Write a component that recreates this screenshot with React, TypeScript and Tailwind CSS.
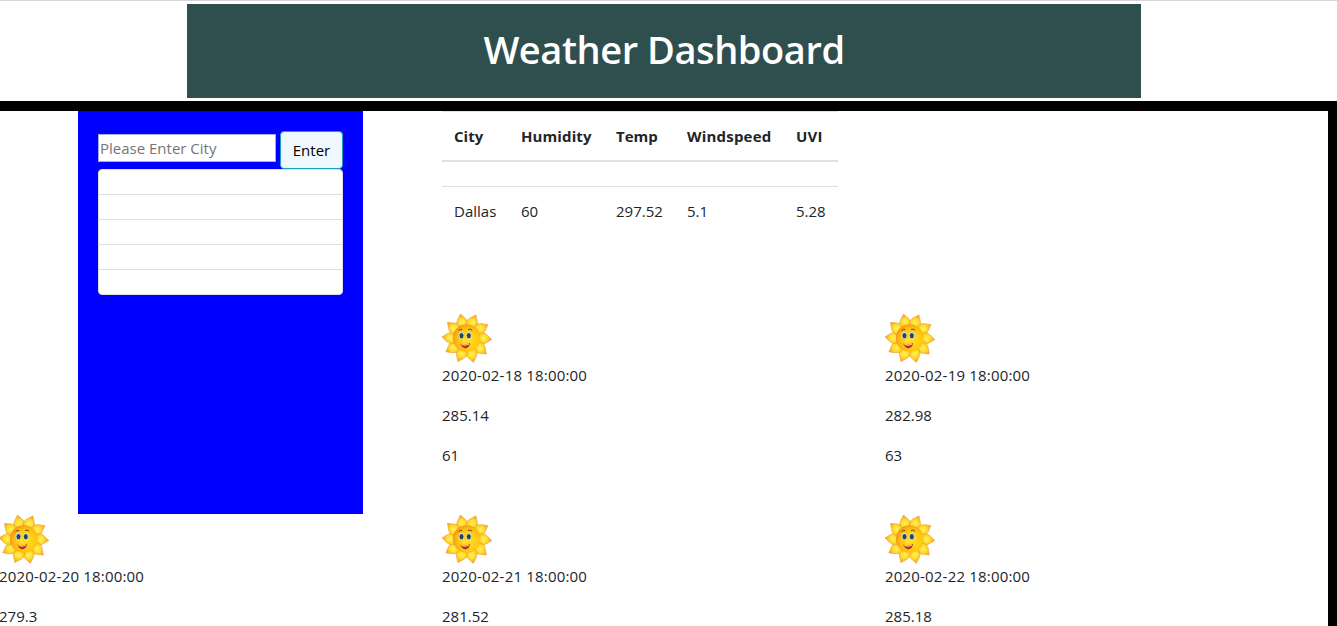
const font = "font-['Open_Sans','Noto_Sans',sans-serif]";

const petalAngles = [10, 46, 82, 118, 154, 190, 226, 262, 298, 334];

function Sun() {
  return (
    <svg className="block size-[50px]" viewBox="0 0 50 50" aria-hidden="true">
      <defs>
        <radialGradient id="petal" gradientUnits="userSpaceOnUse" cx="0" cy="-16.5" r="8.2">
          <stop offset="0" stopColor="#fff25c" />
          <stop offset="0.45" stopColor="#ffdc2c" />
          <stop offset="1" stopColor="#f39a22" />
        </radialGradient>
        <radialGradient id="face" cx="0.58" cy="0.56" r="0.62">
          <stop offset="0" stopColor="#ffe022" />
          <stop offset="0.6" stopColor="#ffc814" />
          <stop offset="0.85" stopColor="#f9a814" />
          <stop offset="1" stopColor="#ee8a18" />
        </radialGradient>
      </defs>
      {petalAngles.map((angle) => (
        <path
          key={angle}
          transform={`translate(24.9 25.2) rotate(${angle - 27})`}
          d="M-4.4 -11 C-7.6 -17 -4.4 -19.5 1 -25 C3 -20.5 7.2 -18 4.8 -11 Z"
          fill="url(#petal)"
          stroke="#f0a03c"
          strokeWidth="0.6"
          strokeLinejoin="round"
        />
      ))}
      <circle cx="24.7" cy="25" r="13.8" fill="url(#face)" />
      <ellipse cx="19.2" cy="22.3" rx="2.7" ry="3.5" fill="#cfdcc8" />
      <ellipse cx="27" cy="22.3" rx="2.7" ry="3.5" fill="#cfdcc8" />
      <ellipse cx="19.5" cy="22.6" rx="2" ry="2.7" fill="#1f4468" />
      <ellipse cx="26.8" cy="22.6" rx="2" ry="2.7" fill="#1f4468" />
      <path d="M16.5 17.6 Q18.3 15.7 20.3 16.7 M26 16.5 Q28.3 15.3 30.3 17.3" fill="none" stroke="#623410" strokeWidth="0.9" />
      <ellipse cx="22.8" cy="27.6" rx="2.4" ry="1.9" fill="#ffdf38" />
      <path d="M18 30.6 Q23 33.3 28.2 29.8 Q27.2 35.4 23 35.4 Q20 35 18 30.6 Z" fill="#b9301c" />
      <path d="M19.3 31.6 Q23.5 33.3 27.2 31" fill="none" stroke="#fff3df" strokeWidth="0.8" />
    </svg>
  );
}

function Forecast({ date, temp, humidity }: { date: string; temp: string; humidity?: string }) {
  return (
    <article className="flex flex-col">
      <Sun />
      <p className="mb-4 h-6 tracking-[0.19px]">{date}</p>
      <p className="h-6">{temp}</p>
      {humidity && <p className="mt-4 h-6">{humidity}</p>}
    </article>
  );
}

export default function App() {
  return (
    <div className={`h-[626px] w-[1337px] overflow-hidden bg-white text-[15px] leading-6 text-[#212529] ${font}`}>
      <header className="flex h-[101px] justify-center border-t border-[#d9d7d8] pr-[9px] pt-[3px]">
        <div className="flex h-[94px] w-[954px] items-center justify-center bg-[#2f4f4f] pb-[5px]">
          <h1 className="text-[38px] font-semibold leading-[48px] tracking-[-0.44px] text-white">Weather Dashboard</h1>
        </div>
      </header>
      <main className="h-[525px] overflow-hidden border-r-[9px] border-t-[10px] border-black">
        <div className="grid grid-cols-[442px_443px_443px]">
          <section className="ml-[78px] h-[403px] w-[285px] bg-[#0000ff] px-5 pt-5">
            <div className="flex h-[38px] items-start gap-1">
              <input
                className="mt-[3px] h-7 w-[178px] border border-[#a9a9dc] bg-white px-px text-[15px] placeholder:text-[#757575]"
                placeholder="Please Enter City"
              />
              <button className="h-[38px] w-[63px] rounded border border-[#17a2b8] bg-[#f0f8ff] text-black">Enter</button>
            </div>
            <ul className="h-[126px] divide-y divide-[#dfdfdf] overflow-hidden rounded border border-[#dfdfdf] bg-white">
              <li className="h-[25px]" />
              <li className="h-[25px]" />
              <li className="h-[25px]" />
              <li className="h-[25px]" />
              <li className="h-6" />
            </ul>
          </section>
          <section className="h-[403px]">
            <div className="h-[202px]">
              <table className="w-[396px] table-fixed border-collapse text-left">
                <colgroup>
                  <col className="w-[67px]" />
                  <col className="w-[95px]" />
                  <col className="w-[71px]" />
                  <col className="w-[109px]" />
                  <col className="w-[54px]" />
                </colgroup>
                <thead>
                  <tr className="h-[49px] border-b-2 border-t border-b-[#dee2e6] border-t-[#dee2e6]">
                    <th className="pl-3 pt-px">City</th>
                    <th className="pl-3 pt-px tracking-[0.1px]">Humidity</th>
                    <th className="pl-3 pt-px">Temp</th>
                    <th className="pl-3 pt-px tracking-[0.2px]">Windspeed</th>
                    <th className="pl-3 pt-px tracking-[0.2px]">UVI</th>
                  </tr>
                </thead>
                <tbody>
                  <tr className="h-[26px]"><td colSpan={5} /></tr>
                  <tr className="h-[49px] border-t border-[#dee2e6]">
                    <td className="pl-3">Dallas</td>
                    <td className="pl-3">60</td>
                    <td className="pl-3">297.52</td>
                    <td className="pl-3">5.1</td>
                    <td className="pl-3">5.28</td>
                  </tr>
                </tbody>
              </table>
            </div>
            <Forecast date="2020-02-18 18:00:00" temp="285.14" humidity="61" />
          </section>
          <section className="h-[403px] pt-[202px]">
            <Forecast date="2020-02-19 18:00:00" temp="282.98" humidity="63" />
          </section>
          <div className="-ml-px"><Forecast date="2020-02-20 18:00:00" temp="279.3" /></div>
          <Forecast date="2020-02-21 18:00:00" temp="281.52" />
          <Forecast date="2020-02-22 18:00:00" temp="285.18" />
        </div>
      </main>
    </div>
  );
}
